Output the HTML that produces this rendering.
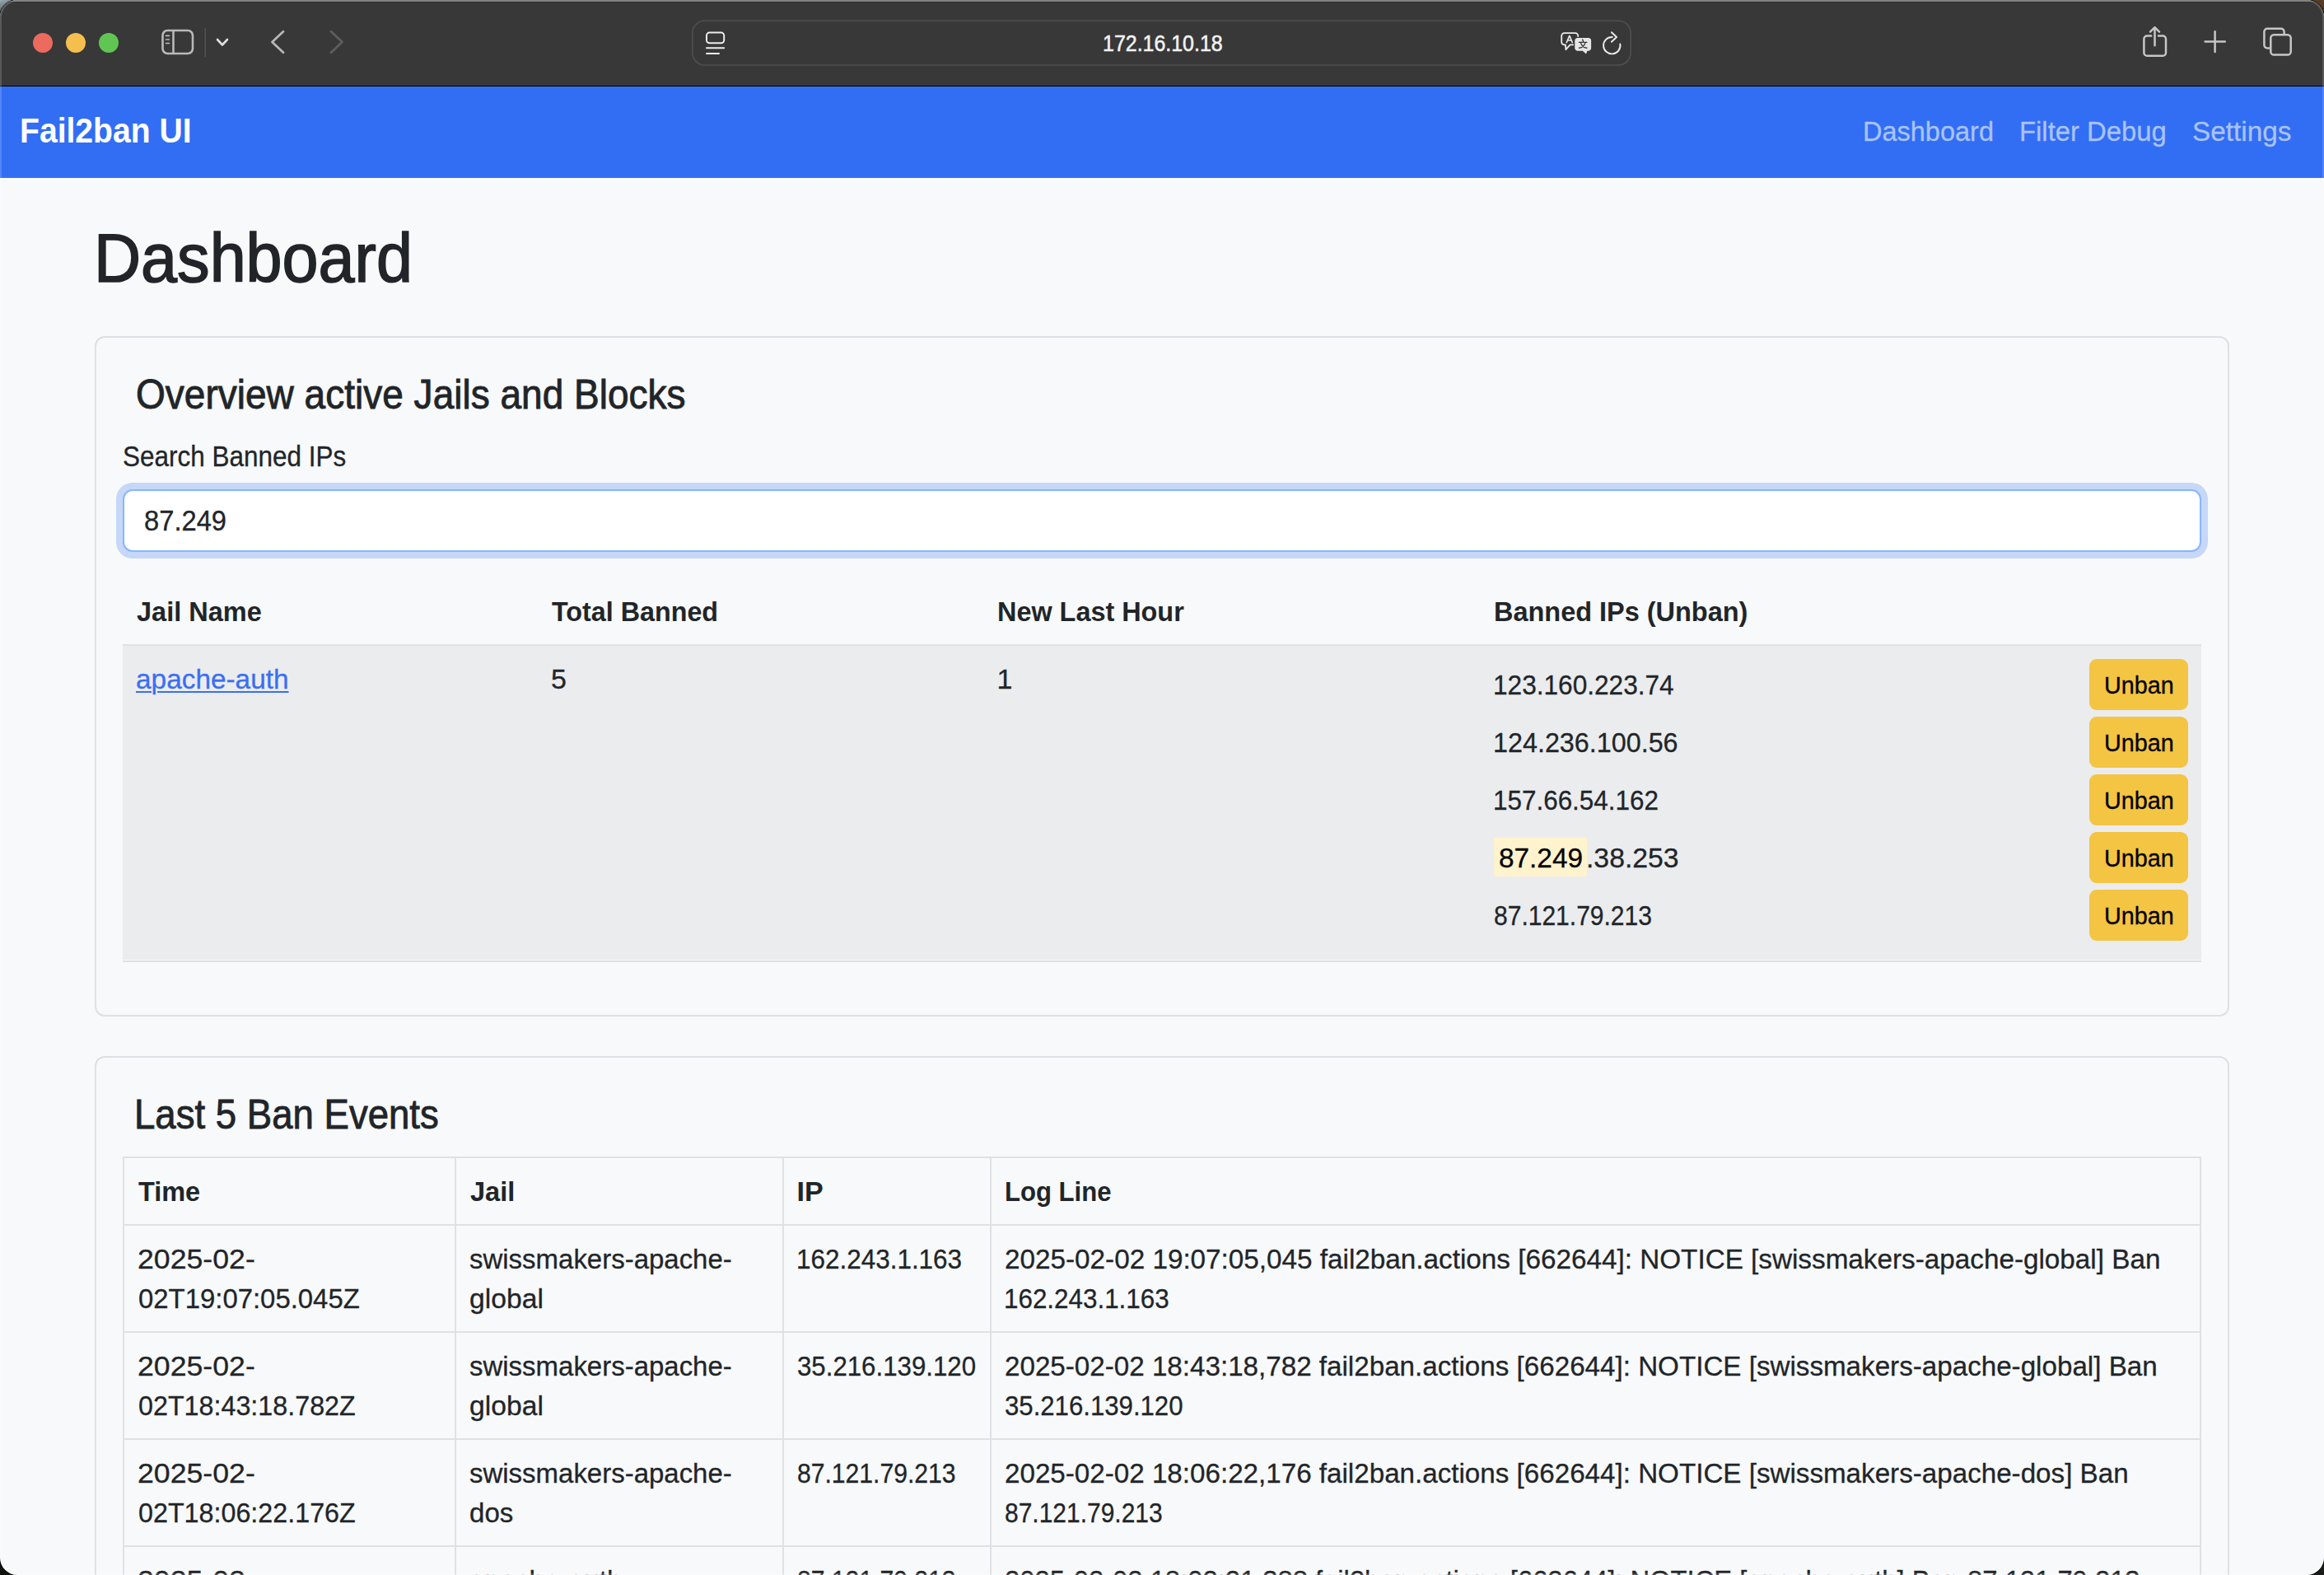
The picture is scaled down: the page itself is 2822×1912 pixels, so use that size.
<!DOCTYPE html>
<html><head><meta charset="utf-8"><title>Fail2ban UI</title>
<style>
html,body{margin:0;padding:0;overflow:hidden;}
body{width:2822px;height:1912px;overflow:hidden;background:#161a17;position:relative;font-family:"Liberation Sans",sans-serif;}
#win{position:absolute;left:0;top:0;width:2822px;height:1912px;border-radius:21px;overflow:hidden;background:#f8f9fa;}
.abs{position:absolute;}
.t{position:absolute;white-space:nowrap;}
#tb{left:0;top:0;width:2822px;height:104px;background:#383838;}
#tbline{left:0;top:104px;width:2822px;height:1px;background:#000;}
#nav{left:0;top:105px;width:2822px;height:111px;background:#326ef4;}
.card{position:absolute;box-sizing:border-box;border:2px solid #dde0e4;border-radius:12px;}
#card1{left:115px;top:408px;width:2592px;height:826px;}
#card2{left:115px;top:1282px;width:2592px;height:800px;}
#ring{left:141px;top:586px;width:2540px;height:92px;border-radius:20px;background:#c6d7f8;}
#inp{left:149px;top:594px;width:2524px;height:76px;box-sizing:border-box;border:2px solid #86b7fe;border-radius:12px;background:#fff;}
.hl{position:absolute;background:#dee2e6;}
#row1{left:149px;top:784px;width:2524px;height:381px;background:#ebecee;}
#mark{left:1814px;top:1017px;width:113px;height:47px;background:#fff3cd;}
.btn{position:absolute;left:2537px;width:120px;height:62px;border-radius:9px;background:#f4c443;}
#frame{left:0;top:0;width:2822px;height:1912px;border-radius:21px;box-shadow:inset 0 0 0 2px rgba(255,255,255,0.17);pointer-events:none;}
</style></head>
<body>
<div class="abs" style="left:0;top:0;width:30px;height:30px;background:linear-gradient(160deg,#9aa9b0 0%,#5d6d70 35%,#1e2a22 75%)"></div>
<div class="abs" style="left:2792px;top:0;width:30px;height:30px;background:linear-gradient(200deg,#5a3e28 0%,#4a321e 60%,#2a1c10 100%)"></div>
<div class="abs" style="left:0;top:1882px;width:30px;height:30px;background:#0e160f"></div>
<div class="abs" style="left:2792px;top:1882px;width:30px;height:30px;background:#1b1d1b"></div>
<div class="abs" style="left:0;top:0;width:2822px;height:1912px;border-radius:21px;box-shadow:0 0 0 1px rgba(0,0,0,0.85)"></div>
<div id="win">
  <div id="tb" class="abs"></div>
  <div id="tbline" class="abs"></div>
  <svg class="abs" style="left:0;top:0" width="2822" height="104" viewBox="0 0 2822 104">
    <circle cx="52" cy="52" r="12" fill="#ec6a5e"/>
    <circle cx="92" cy="52" r="12" fill="#f4bf4f"/>
    <circle cx="132" cy="52" r="12" fill="#61c554"/>
    <!-- sidebar -->
    <rect x="197.5" y="37" width="36.5" height="28" rx="6" fill="none" stroke="#b9b9b9" stroke-width="2.6"/>
    <line x1="210.5" y1="37" x2="210.5" y2="65" stroke="#b9b9b9" stroke-width="2.6"/>
    <line x1="201.6" y1="43.4" x2="205.4" y2="43.4" stroke="#b9b9b9" stroke-width="1.7" stroke-linecap="round"/>
    <line x1="201.6" y1="48" x2="205.4" y2="48" stroke="#b9b9b9" stroke-width="1.7" stroke-linecap="round"/>
    <line x1="201.6" y1="52.5" x2="205.4" y2="52.5" stroke="#b9b9b9" stroke-width="1.7" stroke-linecap="round"/>
    <line x1="249.2" y1="34" x2="249.2" y2="69.5" stroke="#505050" stroke-width="1.6"/>
    <polyline points="264,48 270,54.5 276,48" fill="none" stroke="#dedede" stroke-width="2.6" stroke-linecap="round" stroke-linejoin="round"/>
    <polyline points="344,38.3 330.5,51 344,63.7" fill="none" stroke="#b7b7b7" stroke-width="2.8" stroke-linecap="round" stroke-linejoin="round"/>
    <polyline points="402,38.3 415.5,51 402,63.7" fill="none" stroke="#5e5e5e" stroke-width="2.8" stroke-linecap="round" stroke-linejoin="round"/>
    <!-- url bar -->
    <rect x="840.8" y="25.2" width="1139.4" height="53.8" rx="15" fill="none" stroke="#4f4f4f" stroke-width="1.6"/>
    <rect x="858" y="39.6" width="21.2" height="12.6" rx="3.5" fill="none" stroke="#ececec" stroke-width="2"/>
    <line x1="858" y1="58.3" x2="879.2" y2="58.3" stroke="#ececec" stroke-width="2" stroke-linecap="round"/>
    <line x1="858" y1="65" x2="873" y2="65" stroke="#ececec" stroke-width="2" stroke-linecap="round"/>
    <!-- translate -->
    <path d="M1911,54.3 H1906.6 L1901.4,60.2 L1900.9,54.3 H1899.6 a3.4,3.4 0 0 1 -3.4,-3.4 V43.6 a3.4,3.4 0 0 1 3.4,-3.4 H1912.8 a3.4,3.4 0 0 1 3.4,3.4 V46" fill="none" stroke="#ececec" stroke-width="1.8" stroke-linejoin="round"/>
    <path d="M1902,52.3 L1905.8,43.4 L1909.6,52.3 M1903.3,49 H1908.3" fill="none" stroke="#ececec" stroke-width="1.6" stroke-linejoin="round"/>
    <path d="M1915.8,45.3 H1928.6 a4.2,4.2 0 0 1 4.2,4.2 V58.2 a4.2,4.2 0 0 1 -4.2,4.2 H1927.8 L1926.5,66.8 L1921.5,62.4 H1915.8 a4.2,4.2 0 0 1 -4.2,-4.2 V49.5 a4.2,4.2 0 0 1 4.2,-4.2 Z" fill="#e6e6e6" stroke="#383838" stroke-width="1.3"/>
    <path d="M1917.4,51.4 H1926.9 M1921.6,48 L1922.5,50.3 M1919.3,51.6 Q1921.2,57.6 1926.8,58.3 M1925.1,51.6 Q1923.2,57.6 1917.6,58.3" fill="none" stroke="#383838" stroke-width="1.4" stroke-linecap="round"/>
    <!-- reload -->
    <path d="M1967.3,53.4 A10.2,10.2 0 1 1 1957.8,45" fill="none" stroke="#ececec" stroke-width="1.9" stroke-linecap="round"/>
    <polyline points="1956.9,39.2 1963,45 1956.9,50.8" fill="none" stroke="#ececec" stroke-width="1.9" stroke-linecap="round" stroke-linejoin="round"/>
    <!-- share -->
    <path d="M2612.2,43.4 H2607.2 a3.8,3.8 0 0 0 -3.8,3.8 V64 a3.8,3.8 0 0 0 3.8,3.8 H2626.2 a3.8,3.8 0 0 0 3.8,-3.8 V47.2 a3.8,3.8 0 0 0 -3.8,-3.8 H2621" fill="none" stroke="#c6c6c6" stroke-width="2.5" stroke-linecap="round"/>
    <path d="M2616.5,55.2 V33.4 M2611,38.6 L2616.5,33.2 L2622,38.6" fill="none" stroke="#c6c6c6" stroke-width="2.5" stroke-linecap="round" stroke-linejoin="round"/>
    <!-- plus -->
    <path d="M2677.6,50.6 H2701.8 M2689.6,38.3 V62.9" fill="none" stroke="#c6c6c6" stroke-width="2.5" stroke-linecap="round"/>
    <!-- tabs -->
    <path d="M2757.2,58.6 H2753.2 a3.8,3.8 0 0 1 -3.8,-3.8 V38.6 a3.8,3.8 0 0 1 3.8,-3.8 H2769.8 a3.8,3.8 0 0 1 3.8,3.8 V42.2" fill="none" stroke="#c6c6c6" stroke-width="2.5"/>
    <rect x="2757.3" y="42.3" width="24.4" height="24.3" rx="3.9" fill="none" stroke="#c6c6c6" stroke-width="2.5"/>
  </svg>
  <div id="nav" class="abs"></div>
  <div id="card1" class="card"></div>
  <div id="ring" class="abs"></div>
  <div id="inp" class="abs"></div>
  <div class="hl" style="left:149px;top:782px;width:2524px;height:2px;"></div>
  <div id="row1" class="abs"></div>
  <div class="hl" style="left:149px;top:1166px;width:2524px;height:2px;"></div>
  <div id="mark" class="abs"></div>
  <div class="btn" style="top:800px"></div>
  <div class="btn" style="top:870px"></div>
  <div class="btn" style="top:940px"></div>
  <div class="btn" style="top:1010px"></div>
  <div class="btn" style="top:1080px"></div>
  <div id="card2" class="card"></div>
  <!-- table 2 grid -->
  <div class="hl" style="left:149px;top:1404px;width:2524px;height:2px;"></div>
  <div class="hl" style="left:149px;top:1486px;width:2524px;height:2px;"></div>
  <div class="hl" style="left:149px;top:1616px;width:2524px;height:2px;"></div>
  <div class="hl" style="left:149px;top:1746px;width:2524px;height:2px;"></div>
  <div class="hl" style="left:149px;top:1876px;width:2524px;height:2px;"></div>
  <div class="hl" style="left:149px;top:1404px;width:2px;height:600px;"></div>
  <div class="hl" style="left:552px;top:1404px;width:2px;height:600px;"></div>
  <div class="hl" style="left:950px;top:1404px;width:2px;height:600px;"></div>
  <div class="hl" style="left:1202px;top:1404px;width:2px;height:600px;"></div>
  <div class="hl" style="left:2671px;top:1404px;width:2px;height:600px;"></div>
<div id="x_url" class="t" style="left:1339.40px;top:38.90px;font-size:27.40px;line-height:27.40px;font-weight:400;color:#f2f2f2;letter-spacing:0.000px;transform:scaleX(0.9109);transform-origin:0 0;-webkit-text-stroke:0.55px #f2f2f2;">172.16.10.18</div>
<div id="x_brand" class="t" style="left:24.28px;top:138.20px;font-size:42.40px;line-height:42.40px;font-weight:700;color:#ffffff;letter-spacing:0.000px;transform:scaleX(0.9226);transform-origin:0 0;">Fail2ban UI</div>
<div id="x_nav1" class="t" style="left:2262.13px;top:143.48px;font-size:33.80px;line-height:33.80px;font-weight:400;color:#a9c3fb;letter-spacing:0.000px;transform:scaleX(0.9614);transform-origin:0 0;-webkit-text-stroke:0.3px #a9c3fb;">Dashboard</div>
<div id="x_nav2" class="t" style="left:2452.01px;top:143.48px;font-size:33.80px;line-height:33.80px;font-weight:400;color:#a9c3fb;letter-spacing:0.000px;transform:scaleX(0.9713);transform-origin:0 0;-webkit-text-stroke:0.3px #a9c3fb;">Filter Debug</div>
<div id="x_nav3" class="t" style="left:2662.19px;top:143.48px;font-size:33.80px;line-height:33.80px;font-weight:400;color:#a9c3fb;letter-spacing:0.000px;transform:scaleX(0.9852);transform-origin:0 0;-webkit-text-stroke:0.3px #a9c3fb;">Settings</div>
<div id="x_h1" class="t" style="left:113.51px;top:271.95px;font-size:82.50px;line-height:82.50px;font-weight:400;color:#212529;letter-spacing:0.000px;transform:scaleX(0.9586);transform-origin:0 0;-webkit-text-stroke:1.6px #212529;">Dashboard</div>
<div id="x_ov" class="t" style="left:164.52px;top:454.29px;font-size:49.50px;line-height:49.50px;font-weight:400;color:#212529;letter-spacing:0.000px;transform:scaleX(0.9298);transform-origin:0 0;-webkit-text-stroke:0.9px #212529;">Overview active Jails and Blocks</div>
<div id="x_lbl" class="t" style="left:149.27px;top:537.36px;font-size:34.30px;line-height:34.30px;font-weight:400;color:#212529;letter-spacing:0.000px;transform:scaleX(0.9182);transform-origin:0 0;-webkit-text-stroke:0.3px #212529;">Search Banned IPs</div>
<div id="x_inp" class="t" style="left:175.28px;top:615.36px;font-size:34.30px;line-height:34.30px;font-weight:400;color:#212529;letter-spacing:0.000px;transform:scaleX(0.9539);transform-origin:0 0;-webkit-text-stroke:0.3px #212529;">87.249</div>
<div id="x_th1" class="t" style="left:165.51px;top:725.21px;font-size:34.00px;line-height:34.00px;font-weight:700;color:#212529;letter-spacing:0.000px;transform:scaleX(0.9561);transform-origin:0 0;">Jail Name</div>
<div id="x_th2" class="t" style="left:670.04px;top:725.21px;font-size:34.00px;line-height:34.00px;font-weight:700;color:#212529;letter-spacing:0.000px;transform:scaleX(0.9495);transform-origin:0 0;">Total Banned</div>
<div id="x_th3" class="t" style="left:1211.13px;top:725.21px;font-size:34.00px;line-height:34.00px;font-weight:700;color:#212529;letter-spacing:0.000px;transform:scaleX(0.9526);transform-origin:0 0;">New Last Hour</div>
<div id="x_th4" class="t" style="left:1813.53px;top:725.21px;font-size:34.00px;line-height:34.00px;font-weight:700;color:#212529;letter-spacing:0.000px;transform:scaleX(0.9547);transform-origin:0 0;">Banned IPs (Unban)</div>
<div id="x_td1" class="t" style="left:164.58px;top:807.01px;font-size:34.00px;line-height:34.00px;font-weight:400;color:#3a6ff2;letter-spacing:0.000px;transform:scaleX(0.9817);transform-origin:0 0;text-decoration:underline;text-decoration-thickness:2px;text-underline-offset:3px;-webkit-text-stroke:0.3px #3a6ff2;">apache-auth</div>
<div id="x_td2" class="t" style="left:669.04px;top:807.21px;font-size:34.00px;line-height:34.00px;font-weight:400;color:#212529;letter-spacing:0.000px;-webkit-text-stroke:0.3px #212529;">5</div>
<div id="x_td3" class="t" style="left:1210.41px;top:806.71px;font-size:34.00px;line-height:34.00px;font-weight:400;color:#212529;letter-spacing:0.000px;-webkit-text-stroke:0.3px #212529;">1</div>
<div id="x_ip0" class="t" style="left:1813.29px;top:813.71px;font-size:34.00px;line-height:34.00px;font-weight:400;color:#212529;letter-spacing:0.000px;transform:scaleX(0.9293);transform-origin:0 0;-webkit-text-stroke:0.3px #212529;">123.160.223.74</div>
<div id="x_ip1" class="t" style="left:1813.24px;top:883.71px;font-size:34.00px;line-height:34.00px;font-weight:400;color:#212529;letter-spacing:0.000px;transform:scaleX(0.9502);transform-origin:0 0;-webkit-text-stroke:0.3px #212529;">124.236.100.56</div>
<div id="x_ip2" class="t" style="left:1813.31px;top:953.71px;font-size:34.00px;line-height:34.00px;font-weight:400;color:#212529;letter-spacing:0.000px;transform:scaleX(0.9243);transform-origin:0 0;-webkit-text-stroke:0.3px #212529;">157.66.54.162</div>
<div id="x_ip3a" class="t" style="left:1820.05px;top:1023.71px;font-size:34.00px;line-height:34.00px;font-weight:400;color:#000;letter-spacing:0.000px;transform:scaleX(0.9811);transform-origin:0 0;-webkit-text-stroke:0.3px #000;">87.249</div>
<div id="x_ip3b" class="t" style="left:1925.62px;top:1023.71px;font-size:34.00px;line-height:34.00px;font-weight:400;color:#212529;letter-spacing:0.000px;transform:scaleX(0.9922);transform-origin:0 0;-webkit-text-stroke:0.3px #212529;">.38.253</div>
<div id="x_ip4" class="t" style="left:1814.40px;top:1093.71px;font-size:34.00px;line-height:34.00px;font-weight:400;color:#212529;letter-spacing:0.000px;transform:scaleX(0.8827);transform-origin:0 0;-webkit-text-stroke:0.3px #212529;">87.121.79.213</div>
<div id="x_ub0" class="t" style="left:2554.58px;top:816.92px;font-size:29.50px;line-height:29.50px;font-weight:400;color:#000;letter-spacing:0.000px;transform:scaleX(0.9753);transform-origin:0 0;-webkit-text-stroke:0.3px #000;">Unban</div>
<div id="x_ub1" class="t" style="left:2554.58px;top:886.92px;font-size:29.50px;line-height:29.50px;font-weight:400;color:#000;letter-spacing:0.000px;transform:scaleX(0.9753);transform-origin:0 0;-webkit-text-stroke:0.3px #000;">Unban</div>
<div id="x_ub2" class="t" style="left:2554.58px;top:956.92px;font-size:29.50px;line-height:29.50px;font-weight:400;color:#000;letter-spacing:0.000px;transform:scaleX(0.9753);transform-origin:0 0;-webkit-text-stroke:0.3px #000;">Unban</div>
<div id="x_ub3" class="t" style="left:2554.58px;top:1026.92px;font-size:29.50px;line-height:29.50px;font-weight:400;color:#000;letter-spacing:0.000px;transform:scaleX(0.9753);transform-origin:0 0;-webkit-text-stroke:0.3px #000;">Unban</div>
<div id="x_ub4" class="t" style="left:2554.58px;top:1096.92px;font-size:29.50px;line-height:29.50px;font-weight:400;color:#000;letter-spacing:0.000px;transform:scaleX(0.9753);transform-origin:0 0;-webkit-text-stroke:0.3px #000;">Unban</div>
<div id="x_h2" class="t" style="left:162.86px;top:1328.04px;font-size:50.50px;line-height:50.50px;font-weight:400;color:#212529;letter-spacing:0.000px;transform:scaleX(0.9022);transform-origin:0 0;-webkit-text-stroke:0.9px #212529;">Last 5 Ban Events</div>
<div id="x_t2h1" class="t" style="left:168.44px;top:1429.01px;font-size:34.00px;line-height:34.00px;font-weight:700;color:#212529;letter-spacing:0.000px;transform:scaleX(0.9546);transform-origin:0 0;">Time</div>
<div id="x_t2h2" class="t" style="left:570.81px;top:1429.01px;font-size:34.00px;line-height:34.00px;font-weight:700;color:#212529;letter-spacing:0.000px;transform:scaleX(0.9573);transform-origin:0 0;">Jail</div>
<div id="x_t2h3" class="t" style="left:967.53px;top:1429.01px;font-size:34.00px;line-height:34.00px;font-weight:700;color:#212529;letter-spacing:0.000px;">IP</div>
<div id="x_t2h4" class="t" style="left:1219.62px;top:1429.01px;font-size:34.00px;line-height:34.00px;font-weight:700;color:#212529;letter-spacing:0.000px;transform:scaleX(0.9138);transform-origin:0 0;">Log Line</div>
<div id="x_r0a" class="t" style="left:167.21px;top:1511.01px;font-size:34.00px;line-height:34.00px;font-weight:400;color:#212529;letter-spacing:0.000px;transform:scaleX(1.0490);transform-origin:0 0;-webkit-text-stroke:0.3px #212529;">2025-02-</div>
<div id="x_r0b" class="t" style="left:167.72px;top:1559.01px;font-size:34.00px;line-height:34.00px;font-weight:400;color:#212529;letter-spacing:0.000px;transform:scaleX(0.9673);transform-origin:0 0;-webkit-text-stroke:0.3px #212529;">02T19:07:05.045Z</div>
<div id="x_r0c" class="t" style="left:570.38px;top:1511.01px;font-size:34.00px;line-height:34.00px;font-weight:400;color:#212529;letter-spacing:0.000px;transform:scaleX(0.9696);transform-origin:0 0;-webkit-text-stroke:0.3px #212529;">swissmakers-apache-</div>
<div id="x_r0d" class="t" style="left:569.88px;top:1559.01px;font-size:34.00px;line-height:34.00px;font-weight:400;color:#212529;letter-spacing:0.000px;transform:scaleX(0.9914);transform-origin:0 0;-webkit-text-stroke:0.3px #212529;">global</div>
<div id="x_r0e" class="t" style="left:966.61px;top:1511.01px;font-size:34.00px;line-height:34.00px;font-weight:400;color:#212529;letter-spacing:0.000px;transform:scaleX(0.9248);transform-origin:0 0;-webkit-text-stroke:0.3px #212529;">162.243.1.163</div>
<div id="x_r0f" class="t" style="left:1219.83px;top:1511.01px;font-size:34.00px;line-height:34.00px;font-weight:400;color:#212529;letter-spacing:0.000px;transform:scaleX(0.9783);transform-origin:0 0;-webkit-text-stroke:0.3px #212529;">2025-02-02 19:07:05,045 fail2ban.actions [662644]: NOTICE [swissmakers-apache-global] Ban</div>
<div id="x_r0g" class="t" style="left:1219.11px;top:1559.01px;font-size:34.00px;line-height:34.00px;font-weight:400;color:#212529;letter-spacing:0.000px;transform:scaleX(0.9229);transform-origin:0 0;-webkit-text-stroke:0.3px #212529;">162.243.1.163</div>
<div id="x_r1a" class="t" style="left:167.21px;top:1641.01px;font-size:34.00px;line-height:34.00px;font-weight:400;color:#212529;letter-spacing:0.000px;transform:scaleX(1.0490);transform-origin:0 0;-webkit-text-stroke:0.3px #212529;">2025-02-</div>
<div id="x_r1b" class="t" style="left:167.74px;top:1689.01px;font-size:34.00px;line-height:34.00px;font-weight:400;color:#212529;letter-spacing:0.000px;transform:scaleX(0.9492);transform-origin:0 0;-webkit-text-stroke:0.3px #212529;">02T18:43:18.782Z</div>
<div id="x_r1c" class="t" style="left:570.38px;top:1641.01px;font-size:34.00px;line-height:34.00px;font-weight:400;color:#212529;letter-spacing:0.000px;transform:scaleX(0.9696);transform-origin:0 0;-webkit-text-stroke:0.3px #212529;">swissmakers-apache-</div>
<div id="x_r1d" class="t" style="left:569.88px;top:1689.01px;font-size:34.00px;line-height:34.00px;font-weight:400;color:#212529;letter-spacing:0.000px;transform:scaleX(0.9914);transform-origin:0 0;-webkit-text-stroke:0.3px #212529;">global</div>
<div id="x_r1e" class="t" style="left:967.81px;top:1641.01px;font-size:34.00px;line-height:34.00px;font-weight:400;color:#212529;letter-spacing:0.000px;transform:scaleX(0.9182);transform-origin:0 0;-webkit-text-stroke:0.3px #212529;">35.216.139.120</div>
<div id="x_r1f" class="t" style="left:1219.83px;top:1641.01px;font-size:34.00px;line-height:34.00px;font-weight:400;color:#212529;letter-spacing:0.000px;transform:scaleX(0.9757);transform-origin:0 0;-webkit-text-stroke:0.3px #212529;">2025-02-02 18:43:18,782 fail2ban.actions [662644]: NOTICE [swissmakers-apache-global] Ban</div>
<div id="x_r1g" class="t" style="left:1220.31px;top:1689.01px;font-size:34.00px;line-height:34.00px;font-weight:400;color:#212529;letter-spacing:0.000px;transform:scaleX(0.9161);transform-origin:0 0;-webkit-text-stroke:0.3px #212529;">35.216.139.120</div>
<div id="x_r2a" class="t" style="left:167.21px;top:1771.01px;font-size:34.00px;line-height:34.00px;font-weight:400;color:#212529;letter-spacing:0.000px;transform:scaleX(1.0490);transform-origin:0 0;-webkit-text-stroke:0.3px #212529;">2025-02-</div>
<div id="x_r2b" class="t" style="left:167.74px;top:1819.01px;font-size:34.00px;line-height:34.00px;font-weight:400;color:#212529;letter-spacing:0.000px;transform:scaleX(0.9492);transform-origin:0 0;-webkit-text-stroke:0.3px #212529;">02T18:06:22.176Z</div>
<div id="x_r2c" class="t" style="left:570.38px;top:1771.01px;font-size:34.00px;line-height:34.00px;font-weight:400;color:#212529;letter-spacing:0.000px;transform:scaleX(0.9696);transform-origin:0 0;-webkit-text-stroke:0.3px #212529;">swissmakers-apache-</div>
<div id="x_r2d" class="t" style="left:569.91px;top:1819.01px;font-size:34.00px;line-height:34.00px;font-weight:400;color:#212529;letter-spacing:0.000px;transform:scaleX(0.9718);transform-origin:0 0;-webkit-text-stroke:0.3px #212529;">dos</div>
<div id="x_r2e" class="t" style="left:967.69px;top:1771.01px;font-size:34.00px;line-height:34.00px;font-weight:400;color:#212529;letter-spacing:0.000px;transform:scaleX(0.8855);transform-origin:0 0;-webkit-text-stroke:0.3px #212529;">87.121.79.213</div>
<div id="x_r2f" class="t" style="left:1219.83px;top:1771.01px;font-size:34.00px;line-height:34.00px;font-weight:400;color:#212529;letter-spacing:0.000px;transform:scaleX(0.9757);transform-origin:0 0;-webkit-text-stroke:0.3px #212529;">2025-02-02 18:06:22,176 fail2ban.actions [662644]: NOTICE [swissmakers-apache-dos] Ban</div>
<div id="x_r2g" class="t" style="left:1220.20px;top:1819.01px;font-size:34.00px;line-height:34.00px;font-weight:400;color:#212529;letter-spacing:0.000px;transform:scaleX(0.8813);transform-origin:0 0;-webkit-text-stroke:0.3px #212529;">87.121.79.213</div>
<div id="x_r3a" class="t" style="left:167.21px;top:1901.01px;font-size:34.00px;line-height:34.00px;font-weight:400;color:#212529;letter-spacing:0.000px;transform:scaleX(1.0490);transform-origin:0 0;-webkit-text-stroke:0.3px #212529;">2025-02-</div>
<div id="x_r3c" class="t" style="left:569.88px;top:1901.01px;font-size:34.00px;line-height:34.00px;font-weight:400;color:#212529;letter-spacing:0.000px;transform:scaleX(0.9817);transform-origin:0 0;-webkit-text-stroke:0.3px #212529;">apache-auth</div>
<div id="x_r3e" class="t" style="left:967.69px;top:1901.01px;font-size:34.00px;line-height:34.00px;font-weight:400;color:#212529;letter-spacing:0.000px;transform:scaleX(0.8855);transform-origin:0 0;-webkit-text-stroke:0.3px #212529;">87.121.79.213</div>
<div id="x_r3f" class="t" style="left:1219.85px;top:1901.01px;font-size:34.00px;line-height:34.00px;font-weight:400;color:#212529;letter-spacing:0.000px;transform:scaleX(0.9634);transform-origin:0 0;-webkit-text-stroke:0.3px #212529;">2025-02-02 18:02:21,388 fail2ban.actions [662644]: NOTICE [apache-auth] Ban 87.121.79.213</div>
  <div id="frame" class="abs"></div>
  <div class="abs" style="left:0;top:0;width:2822px;height:2px;background:rgba(255,255,255,0.25)"></div>
  <div class="abs" style="left:0;top:2px;width:2822px;height:1px;background:rgba(0,0,0,0.12)"></div>
</div>
</body></html>
